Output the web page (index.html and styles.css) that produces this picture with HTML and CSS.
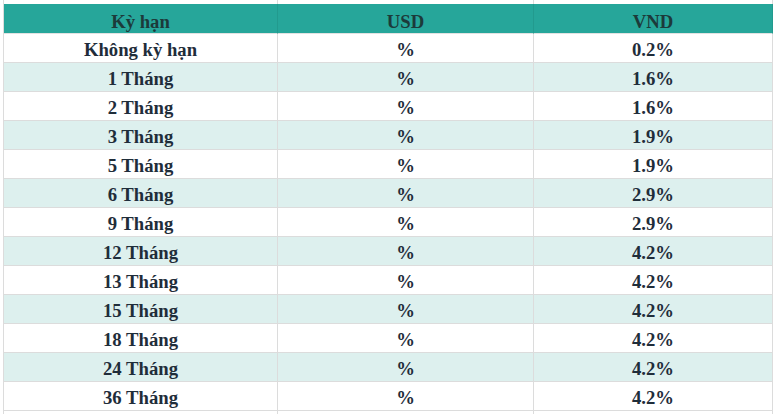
FILE: index.html
```html
<!DOCTYPE html>
<html lang="vi">
<head>
<meta charset="utf-8">
<title>Lãi suất</title>
<link rel="stylesheet" href="styles.css">
</head>
<body>
<table class="rates">
  <colgroup>
    <col class="c1"><col class="c2"><col class="c3">
  </colgroup>
  <tbody>
    <tr class="spacer"><td></td><td></td><td></td></tr>
    <tr class="head"><th>Kỳ hạn</th><th>USD</th><th>VND</th></tr>
    <tr><td>Không kỳ hạn</td><td>%</td><td>0.2%</td></tr>
    <tr class="alt"><td>1 Tháng</td><td>%</td><td>1.6%</td></tr>
    <tr><td>2 Tháng</td><td>%</td><td>1.6%</td></tr>
    <tr class="alt"><td>3 Tháng</td><td>%</td><td>1.9%</td></tr>
    <tr><td>5 Tháng</td><td>%</td><td>1.9%</td></tr>
    <tr class="alt"><td>6 Tháng</td><td>%</td><td>2.9%</td></tr>
    <tr><td>9 Tháng</td><td>%</td><td>2.9%</td></tr>
    <tr class="alt"><td>12 Tháng</td><td>%</td><td>4.2%</td></tr>
    <tr><td>13 Tháng</td><td>%</td><td>4.2%</td></tr>
    <tr class="alt"><td>15 Tháng</td><td>%</td><td>4.2%</td></tr>
    <tr><td>18 Tháng</td><td>%</td><td>4.2%</td></tr>
    <tr class="alt"><td>24 Tháng</td><td>%</td><td>4.2%</td></tr>
    <tr><td>36 Tháng</td><td>%</td><td>4.2%</td></tr>
    <tr class="spacer"><td></td><td></td><td></td></tr>
  </tbody>
</table>
</body>
</html>
```
FILE: styles.css
```css
html, body {
  margin: 0;
  padding: 0;
  background: #ffffff;
}
body {
  overflow: hidden;
}
.rates {
  margin-left: 3px;
  box-sizing: border-box;
  width: 770px;
  table-layout: fixed;
  border-collapse: separate;
  border-spacing: 0;
  border-left: 1px solid #dcdcdc;
  font-family: "Liberation Serif", "Times New Roman", serif;
  font-weight: bold;
  font-size: 18.7px;
  color: #1f2d3a;
}
.c1 { width: 274px; }
.c2 { width: 256px; }
.c3 { width: 239px; }
.rates td, .rates th {
  box-sizing: border-box;
  height: 29px;
  padding: 4px 0 0;
  text-align: center;
  vertical-align: middle;
  border-right: 1px solid #dcdcdc;
  border-bottom: 1px solid #dcdcdc;
  white-space: nowrap;
  line-height: normal;
}
.rates tr.spacer td {
  height: 4px;
  padding: 0;
  border-bottom: none;
  line-height: 0;
  font-size: 0;
}
.rates tr.head th {
  height: 30px;
  padding-top: 6px;
  background: #26a69a;
  color: #1c3a3a;
  border-right-color: #229a8e;
  border-bottom-color: #e2e2e2;
  font-weight: bold;
}
.rates tr.alt td {
  background: #ddf0ee;
}
```
